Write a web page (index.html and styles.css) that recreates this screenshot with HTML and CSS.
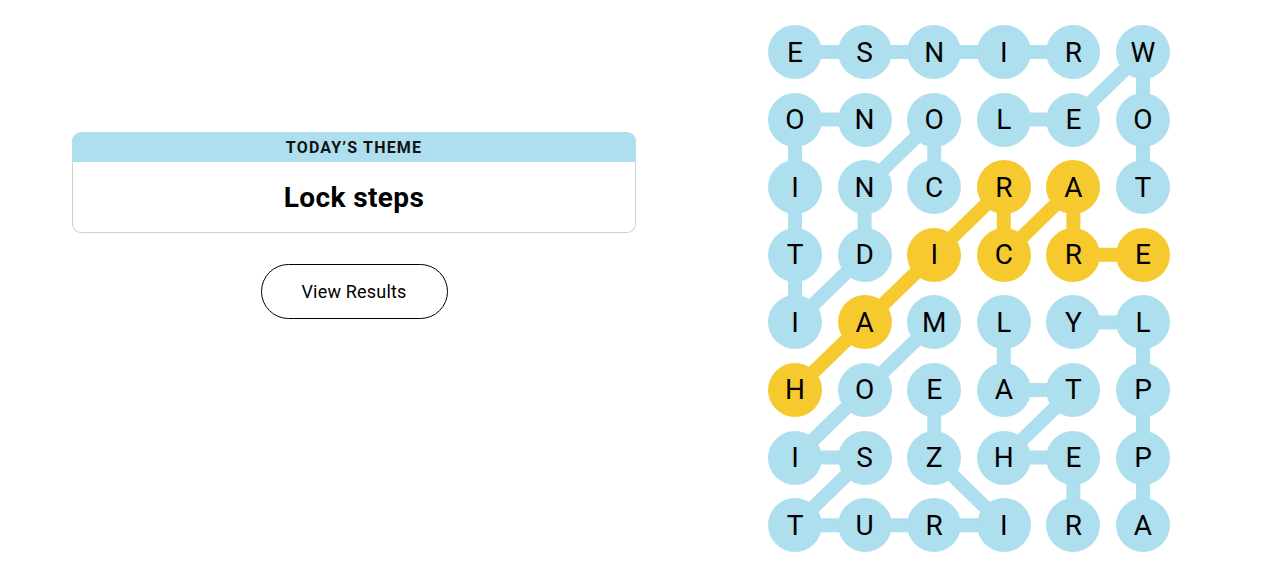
FILE: index.html
```html
<!DOCTYPE html>
<html lang="en">
<head>
  <meta charset="UTF-8">
  <title>Strands</title>
  <meta name="viewport" content="width=device-width, initial-scale=1">
  <link rel="stylesheet" href="styles.css">
</head>
<body>
  <main class="game">
    <section class="info">
      <div class="theme">
        <div class="theme-label">Today’s Theme</div>
        <div class="theme-clue">Lock steps</div>
      </div>
      <button class="results-btn">View Results</button>
    </section>
    <section class="board">
      <svg class="links" id="links" width="402" height="528"></svg>
      <div class="grid" id="grid"></div>
    </section>
  </main>
  <script>
    const rows = [
      'ESNIRW',
      'ONOLEO',
      'INCRAT',
      'TDICRE',
      'IAMLYL',
      'HOEATP',
      'ISZHEP',
      'TURIRA'
    ];

    // caminhos das palavras encontradas [linha, coluna]
    const words = [
      { path: [[0,4],[0,3],[0,2],[0,1],[0,0]] },
      { path: [[2,5],[1,5],[0,5],[1,4],[1,3]] },
      { path: [[2,2],[1,2],[2,1],[3,1],[4,0],[3,0],[2,0],[1,0],[1,1]] },
      { path: [[4,2],[5,1],[6,0],[6,1],[7,0],[7,1],[7,2],[7,3],[6,2],[5,2]] },
      { path: [[4,3],[5,3],[5,4],[6,3],[6,4],[7,4]] },
      { path: [[7,5],[6,5],[5,5],[4,5],[4,4]] },
      { path: [[5,0],[4,1],[3,2],[2,3],[3,3],[2,4],[3,4],[3,5]], span: true }
    ];

    const COL = 69.6, ROW = 67.6, R = 27;
    const grid = document.getElementById('grid');
    const links = document.getElementById('links');
    const spanCells = {};

    words.forEach(w => {
      const pts = w.path;
      if (w.span) pts.forEach(p => { spanCells[p[0] + '-' + p[1]] = true; });
      for (let i = 1; i < pts.length; i++) {
        const a = pts[i - 1], b = pts[i];
        const line = document.createElementNS('http://www.w3.org/2000/svg', 'line');
        line.setAttribute('x1', R + a[1] * COL);
        line.setAttribute('y1', R + a[0] * ROW);
        line.setAttribute('x2', R + b[1] * COL);
        line.setAttribute('y2', R + b[0] * ROW);
        line.setAttribute('class', w.span ? 'link span' : 'link');
        links.appendChild(line);
      }
    });

    rows.forEach((row, r) => {
      row.split('').forEach((ch, c) => {
        const cell = document.createElement('button');
        cell.className = spanCells[r + '-' + c] ? 'cell span' : 'cell';
        cell.textContent = ch;
        grid.appendChild(cell);
      });
    });
  </script>
</body>
</html>
```

FILE: styles.css
```css
body {
  margin: 0;
  background: #fff;
  font-family: Roboto, 'Liberation Sans', Arial, sans-serif;
  color: #000;
}
.game {
  display: flex;
  align-items: flex-start;
  padding-left: 72px;
  gap: 132px;
  height: 582px;
  box-sizing: border-box;
}
.info {
  width: 564px;
  padding-top: 132px;
  display: flex;
  flex-direction: column;
  align-items: center;
}
.theme {
  width: 100%;
}
.theme-label {
  background: #aedfee;
  border-radius: 9px 9px 0 0;
  height: 30px;
  line-height: 31px;
  text-align: center;
  font-size: 16px;
  font-weight: 700;
  text-transform: uppercase;
  letter-spacing: 1.2px;
  color: #121212;
}
.theme-clue {
  border: 1px solid #cfcfcf;
  border-top: none;
  border-radius: 0 0 9px 9px;
  height: 70px;
  line-height: 72px;
  text-align: center;
  font-size: 28px;
  font-weight: 700;
  letter-spacing: 0.4px;
}
.results-btn {
  margin-top: 31px;
  width: 187px;
  height: 55px;
  border: 1px solid #000;
  border-radius: 28px;
  background: #fff;
  font-family: inherit;
  font-size: 18px;
  letter-spacing: 0.2px;
  color: #000;
  cursor: pointer;
}
.board {
  position: relative;
  margin-top: 25px;
  width: 402px;
}
.links {
  position: absolute;
  left: 0;
  top: 0;
}
.link {
  stroke: #aedfee;
  stroke-width: 14;
}
.link.span {
  stroke: #f6ca2f;
}
.grid {
  position: relative;
  display: grid;
  grid-template-columns: repeat(6, 54px);
  grid-auto-rows: 54px;
  column-gap: 15.6px;
  row-gap: 13.6px;
}
.cell {
  width: 54px;
  height: 54px;
  padding: 0;
  border: none;
  border-radius: 50%;
  background: #aedfee;
  font-family: inherit;
  font-size: 28px;
  color: #000;
  display: flex;
  align-items: center;
  justify-content: center;
}
.cell.span {
  background: #f6ca2f;
}
```
